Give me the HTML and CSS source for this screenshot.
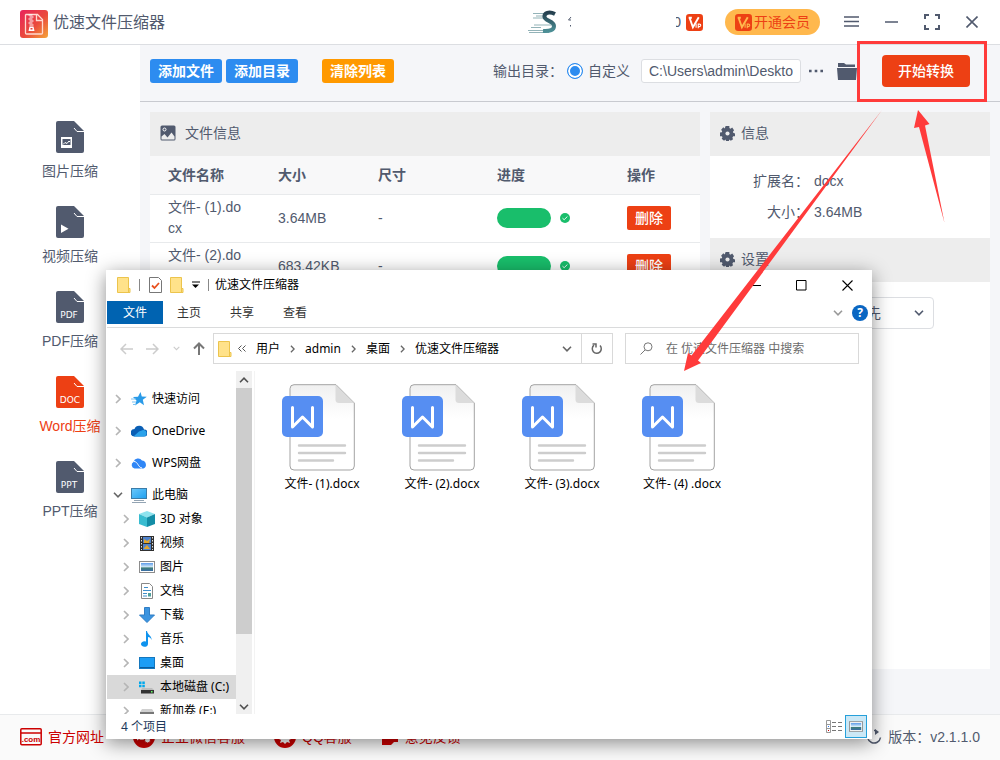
FILE: index.html
```
<!DOCTYPE html>
<html lang="zh-CN">
<head>
  <meta charset="UTF-8" />
  <meta name="viewport" content="width=device-width, initial-scale=1.0"/>
  <title>优速文件压缩器</title>
  <link rel="stylesheet" href="styles.css">
</head>
<body>

  <!-- Shared icons -->
  <svg class="sprite" aria-hidden="true">
    <defs>
      <linearGradient id="logo-bg" x1="0" y1="0" x2="1" y2="1">
        <stop offset="0" stop-color="#e8245c"/><stop offset=".55" stop-color="#ea4a3c"/><stop offset="1" stop-color="#f5a63a"/>
      </linearGradient>
      <linearGradient id="avatar-s" x1="0" y1="0" x2="0" y2="1">
        <stop offset="0" stop-color="#25404f"/><stop offset="1" stop-color="#4c8f96"/>
      </linearGradient>
      <linearGradient id="paper" x1="0" y1="0" x2="0" y2="1">
        <stop offset="0" stop-color="#f0f0f0"/><stop offset=".4" stop-color="#fff"/>
      </linearGradient>
      <linearGradient id="sky" x1="0" y1="0" x2="0" y2="1">
        <stop offset="0" stop-color="#5b9bea"/><stop offset=".5" stop-color="#d8ecf8"/><stop offset=".6" stop-color="#3f7f78"/><stop offset="1" stop-color="#3b6ea8"/>
      </linearGradient>
      <linearGradient id="screen" x1="0" y1="0" x2="1" y2="1">
        <stop offset="0" stop-color="#6cc8fa"/><stop offset="1" stop-color="#1fa0f0"/>
      </linearGradient>
    </defs>
    <symbol id="page" viewBox="0 0 28 32">
      <path d="M2 0H18L28 10V30a2 2 0 0 1-2 2H2a2 2 0 0 1-2-2V2a2 2 0 0 1 2-2z" fill="currentColor"/>
      <path d="M18 7l3 3.500h7" fill="none" stroke="#fff"/>
    </symbol>
    <symbol id="folder" viewBox="0 0 14 16">
      <path d="M.5.500h11v11h1.500v4H.5z" fill="#ffe28a" stroke="#ecc44c"/>
      <path d="M11.500 11v4" stroke="#ecc44c"/>
    </symbol>
    <symbol id="vip" viewBox="0 0 16 16">
      <rect width="16" height="16" rx="3" fill="#ed4014"/>
      <path d="M2.500 3.500h3M3.500 4l3 8.500L12 3" fill="none" stroke="var(--vip)" stroke-width="1.800"/>
      <path d="M9.500 9v4M11.500 13.500V9.500h1.200a1.200 1.200 0 0 1 0 2.400h-1" fill="none" stroke="var(--vip)"/>
    </symbol>
    <symbol id="gear" viewBox="0 0 16 16">
      <path d="M6 0h4v2.200l1.200.6L13 1.500 15 4.500 13.800 6l.3 1.300L16 8v3h-2l-.8 1.500.8 1.500-2.500 1.800-1.500-1.300L9.500 16h-3l-.7-1.600-1.500 1.300L1.800 13.500l.9-1.500L2 11H0V7l2-.3L2.300 5.500 1.200 4 3.500 1.300 5 2.700z" fill="currentColor"/>
      <circle cx="8" cy="8" r="2.200" fill="#ededed"/>
    </symbol>
    <symbol id="right" viewBox="0 0 6 10"><path d="M1 1l4 4-4 4" fill="none" stroke="currentColor" stroke-width="1.600"/></symbol>
    <symbol id="down" viewBox="0 0 10 6"><path d="M1 .8l4 4 4-4" fill="none" stroke="currentColor" stroke-width="1.600"/></symbol>
    <symbol id="ok" viewBox="0 0 10 10">
      <circle cx="5" cy="5" r="5" fill="#19be6b"/><path d="M2.500 5.200l1.700 1.500 3.200-3.200" fill="none" stroke="#fff" stroke-width=".9"/>
    </symbol>
    <symbol id="photo" viewBox="0 0 16 12">
      <rect x=".5" y=".5" width="15" height="11" fill="#fff" stroke="#8c8c8c"/><rect x="2" y="2" width="12" height="8" fill="url(#sky)"/>
    </symbol>
    <symbol id="word" viewBox="0 0 80 88">
      <path d="M12 .7H54L72.300 19V82a4 4 0 0 1-4 4H12a4 4 0 0 1-4-4V4.700a4 4 0 0 1 4-4z" fill="url(#paper)" stroke="#a3a3a3"/>
      <path d="M53.500.700L72 19H57a3.500 3.500 0 0 1-3.500-3.500z" fill="#dcdcdc"/>
      <rect y="12" width="41" height="41" rx="5" fill="#568ef2"/>
      <path d="M10.500 23.500V43l10-10 10 10V23.500" fill="none" stroke="#fff" stroke-width="3" stroke-linecap="round" stroke-linejoin="round"/>
      <path d="M17 61.500h46M17 69h46M17 76.500h34" stroke="#cdcdcd" stroke-width="2.400" stroke-linecap="round"/>
    </symbol>
  </svg>

  <div class="app">
    <header class="topbar">
      <div class="brand">
        <svg width="28" height="28" viewBox="0 0 28 28">
          <rect width="28" height="28" rx="3" fill="url(#logo-bg)"/>
          <path d="M6 4.500h11.500l5 5V23a1 1 0 0 1-1 1H6.500a1 1 0 0 1-1-1V5z" fill="none" stroke="#ffd9d0" stroke-width="1.300"/>
          <path d="M16.500 5v5.500h5.500" fill="none" stroke="#ffd9d0" stroke-width="1.300"/>
          <path d="M8.500 5h4M9.500 7h4M8.500 9h4M9.500 11h4M8.500 13h4M9.500 15h4" stroke="#fff" stroke-width="1.200"/>
          <path d="M9.500 16.500h4l1 4.500h-6z" fill="#fff"/><rect x="10.500" y="18" width="2" height="1.500" fill="#e8433f"/>
        </svg>
        <h1>优速文件压缩器</h1>
      </div>
      <div class="account">
        <svg class="avatar" width="30" height="24" viewBox="0 0 30 24">
          <path d="M5 3.500h11M8 6h7M5 8h10M6 15h18M3 17.500h10M0 20.500h18M1 22.500h20" stroke="#93b3b8" stroke-width="1.200"/>
          <path d="M27 4C21 1 16 3 16.500 7c.5 4 9.500 4 9.500 9 0 4-4 5.500-11 5" fill="none" stroke="url(#avatar-s)" stroke-width="4"/>
        </svg>
        <svg class="name-end" width="4" height="10" viewBox="0 0 4 10"><path d="M3 0L.5 3H3M2.500 8v1.500" fill="none" stroke="#515a6e"/></svg>
        <span class="count">0</span>
        <svg class="vip" width="17" height="17"><use href="#vip"/></svg>
        <button class="member"><svg width="17" height="17"><use href="#vip"/></svg>开通会员</button>
      </div>
      <div class="controls">
        <button aria-label="菜单"><svg width="15" height="12" viewBox="0 0 15 12"><path d="M0 1h15M0 5.500h15M0 10h15" stroke="currentColor" stroke-width="1.500"/></svg></button>
        <button aria-label="最小化"><svg width="13" height="12" viewBox="0 0 13 12"><path d="M0 6h13" stroke="currentColor" stroke-width="1.500"/></svg></button>
        <button aria-label="最大化"><svg width="16" height="16" viewBox="0 0 16 16"><path d="M1 5V1h4M11 1h4v4M15 11v4h-4M5 15H1v-4" fill="none" stroke="currentColor" stroke-width="2"/></svg></button>
        <button aria-label="关闭"><svg width="12" height="12" viewBox="0 0 12 12"><path d="M.5.500l11 11M11.500.500l-11 11" stroke="currentColor" stroke-width="1.600"/></svg></button>
      </div>
    </header>

    <div class="workspace">
      <nav class="sidebar">
        <a href="#image"><svg width="28" height="32"><use href="#page"/><rect x="5" y="16" width="11" height="11" fill="#fff"/><rect x="6.500" y="18" width="8" height="6" fill="#515a6e"/><path d="M7 23.500l2-2 2 1 2-2.500 1 1" fill="none" stroke="#fff"/></svg>图片压缩</a>
        <a href="#video"><svg width="28" height="32"><use href="#page"/><path d="M5 18.500v8.500l7.500-4.200z" fill="#fff"/></svg>视频压缩</a>
        <a href="#pdf"><svg width="28" height="32"><use href="#page"/><text x="13" y="27">PDF</text></svg>PDF压缩</a>
        <a href="#word-files" class="active"><svg width="28" height="32"><use href="#page"/><text x="14" y="27">DOC</text></svg>Word压缩</a>
        <a href="#ppt"><svg width="28" height="32"><use href="#page"/><text x="13" y="27">PPT</text></svg>PPT压缩</a>
      </nav>

      <main>
        <div class="toolbar">
          <button class="btn add">添加文件</button>
          <button class="btn add">添加目录</button>
          <button class="btn clear">清除列表</button>
          <div class="output">
            <span>输出目录：</span>
            <label class="choice"><input type="radio" name="output" checked>自定义</label>
            <input class="path" type="text" aria-label="输出路径" value="C:\Users\admin\Deskto">
            <button class="icon-btn" aria-label="更多"><svg width="14" height="4" viewBox="0 0 14 4"><path d="M0 .7h2.600v2.600H0zM5.700.700h2.600v2.600H5.700zM11.400.700H14v2.600h-2.600z" fill="currentColor"/></svg></button>
            <button class="icon-btn" aria-label="打开目录"><svg width="20" height="17" viewBox="0 0 20 17"><path d="M1 0h6l2 1.500h9V4H1zM0 5h20l-1 12H1z" fill="currentColor"/></svg></button>
          </div>
          <button class="start">开始转换</button>
        </div>

        <div class="content">
          <section class="card files">
            <h2><svg width="16" height="16" viewBox="0 0 16 16"><rect x=".5" y=".5" width="15" height="15" rx="1.500" fill="#515a6e"/><circle cx="4.500" cy="4.500" r="1.500" fill="none" stroke="#fff"/><path d="M1.500 14.500v-3l3-2.500 3 3.500 4-5 3 4v3z" fill="#ededed"/></svg>文件信息</h2>
            <table>
              <thead>
                <tr><th class="c-name">文件名称</th><th class="c-size">大小</th><th class="c-dim">尺寸</th><th class="c-prog">进度</th><th>操作</th></tr>
              </thead>
              <tbody>
                <tr>
                  <td class="name">文件- (1).docx</td><td>3.64MB</td><td>-</td>
                  <td><div class="state"><span class="bar"></span><svg width="10" height="10"><use href="#ok"/></svg></div></td>
                  <td><button class="remove">删除</button></td>
                </tr>
                <tr>
                  <td class="name">文件- (2).docx</td><td>683.42KB</td><td>-</td>
                  <td><div class="state"><span class="bar"></span><svg width="10" height="10"><use href="#ok"/></svg></div></td>
                  <td><button class="remove">删除</button></td>
                </tr>
              </tbody>
            </table>
          </section>

          <aside class="card detail">
            <h2><svg width="15" height="15"><use href="#gear"/></svg>信息</h2>
            <dl>
              <dt>扩展名：</dt><dd>docx</dd>
              <dt>大小：</dt><dd>3.64MB</dd>
            </dl>
            <h2><svg width="15" height="15"><use href="#gear"/></svg>设置</h2>
            <div class="setting">
              <select aria-label="压缩设置"><option>画质优先</option></select>
              <svg width="10" height="6"><use href="#down"/></svg>
            </div>
          </aside>
        </div>
      </main>
    </div>

    <footer class="bottom">
      <a href="#site"><svg width="22" height="18" viewBox="0 0 22 18"><rect x=".8" y=".8" width="20.400" height="16" rx="1" fill="none" stroke="#c00" stroke-width="1.500"/><path d="M1 5h20" stroke="#c00" stroke-width="1.500"/><text x="11" y="14" class="dotcom">.com</text></svg>官方网址</a>
      <a href="#wechat"><svg width="22" height="22" viewBox="0 0 22 22"><circle cx="11" cy="11" r="11" fill="#c00"/><path d="M4 10a5 4 0 0 1 10 0 5 4 0 0 1-8 3l-2 1.500z" fill="#fff"/><circle cx="14.500" cy="14" r="3" fill="#fff" stroke="#c00"/></svg>企业微信客服</a>
      <a href="#qq"><svg width="22" height="22" viewBox="0 0 22 22"><circle cx="11" cy="11" r="11" fill="#c00"/><path d="M11 4a4 4 0 0 1 4 4l2 5-2 1 1 3-3-1-2 2-2-2-3 1 1-3-2-1 2-5a4 4 0 0 1 4-4z" fill="#fff"/></svg>QQ客服</a>
      <a href="#feedback"><svg width="18" height="18" viewBox="0 0 18 18"><path d="M1 2h12l4 4v8h-4l-3 3H1z" fill="#c00"/><path d="M4 7h8M4 10h6" stroke="#fff"/></svg>意见反馈</a>
      <span class="version"><svg width="16" height="16" viewBox="0 0 16 16"><path d="M3 3.500a6.500 6.500 0 1 0 11.500 5M8 1.500h2" fill="none" stroke="#515a6e" stroke-width="1.500"/><path d="M9 0l4 3-4 3z" fill="#515a6e"/></svg>版本：v2.1.1.0</span>
    </footer>
  </div>

  <!-- File explorer window -->
  <section class="explorer">
    <div class="titlebar">
      <svg width="14" height="16"><use href="#folder"/></svg>
      <i class="sep"></i>
      <svg width="13" height="16" viewBox="0 0 13 16"><path d="M.5.500h9l3 3v12H.5z" fill="#fff" stroke="#777"/><path d="M3 8.500l2.500 2.500L10 6" fill="none" stroke="#e8501e" stroke-width="1.800"/></svg>
      <svg width="14" height="16"><use href="#folder"/></svg>
      <svg class="drop" width="8" height="8" viewBox="0 0 8 8"><path d="M0 1h8" stroke="#000"/><path d="M0 3.500h7L3.500 7z"/></svg>
      <i class="sep"></i>
      <span class="title">优速文件压缩器</span>
      <div class="win-controls">
        <button aria-label="最小化"><svg width="11" height="11" viewBox="0 0 11 11"><path d="M0 5.500h11" stroke="#000"/></svg></button>
        <button aria-label="最大化"><svg width="11" height="11" viewBox="0 0 11 11"><path d="M.5.500h9.500v9.500H.5z" fill="none" stroke="#000"/></svg></button>
        <button aria-label="关闭"><svg width="11" height="11" viewBox="0 0 11 11"><path d="M.5.500l10 10M10.500.500l-10 10" stroke="#000" stroke-width="1.100"/></svg></button>
      </div>
    </div>

    <div class="ribbon">
      <button class="file-tab">文件</button>
      <button>主页</button>
      <button>共享</button>
      <button>查看</button>
      <div class="help">
        <svg class="grey" width="10" height="6"><use href="#down"/></svg>
        <span>?</span>
      </div>
    </div>

    <div class="navrow">
      <div class="arrows">
        <svg class="off" width="13" height="12" viewBox="0 0 13 12"><path d="M6 1L1 6l5 5M1 6h12" fill="none" stroke="currentColor" stroke-width="1.500"/></svg>
        <svg class="off" width="13" height="12" viewBox="0 0 13 12"><path d="M7 1l5 5-5 5M12 6H0" fill="none" stroke="currentColor" stroke-width="1.500"/></svg>
        <svg class="off" width="7" height="5"><use href="#down"/></svg>
        <svg class="up" width="12" height="13" viewBox="0 0 12 13"><path d="M1 6.500L6 1.500l5 5M6 2v11" fill="none" stroke="currentColor" stroke-width="2"/></svg>
      </div>
      <div class="address">
        <svg width="14" height="16"><use href="#folder"/></svg>
        <svg class="back" width="8" height="7" viewBox="0 0 8 7"><path d="M3.500.500l-3 3 3 3M7.500.500l-3 3 3 3" fill="none" stroke="#555"/></svg>
        <a href="#users">用户</a>
        <svg width="5" height="8"><use href="#right"/></svg>
        <a href="#admin">admin</a>
        <svg width="5" height="8"><use href="#right"/></svg>
        <a href="#desktop">桌面</a>
        <svg width="5" height="8"><use href="#right"/></svg>
        <a href="#current">优速文件压缩器</a>
        <svg class="more" width="10" height="6"><use href="#down"/></svg>
        <button aria-label="刷新"><svg width="12" height="12" viewBox="0 0 12 12"><path d="M3 2.200A4.500 4.500 0 1 0 9 2.600" fill="none" stroke="#666" stroke-width="1.500"/><path d="M1.500 1h3.500v3.500" fill="none" stroke="#666" stroke-width="1.500"/></svg></button>
      </div>
      <label class="search">
        <svg width="13" height="13" viewBox="0 0 13 13"><circle cx="8" cy="4.800" r="4" fill="none" stroke="#777"/><path d="M5 8L.5 12.500" stroke="#777"/></svg>
        <input type="text" aria-label="搜索" placeholder="在 优速文件压缩器 中搜索">
      </label>
    </div>

    <div class="panes">
      <ul class="tree">
        <li class="root"><svg class="tw" width="6" height="10"><use href="#right"/></svg><svg width="16" height="16" viewBox="0 0 16 16"><path d="M9.500 1l1.300 4.500 5 .3-4 3 1.200 5.500-4.200-3L4 14.500l1.500-5L2 6l5-.3z" fill="#2a9be8"/><path d="M0 8h5M1 11h4M2 13.500h3" stroke="#7cc3f2"/></svg>快速访问</li>
        <li class="root"><svg class="tw" width="6" height="10"><use href="#right"/></svg><svg width="16" height="16" viewBox="0 0 16 16"><path d="M3.500 13.500a3.500 3.500 0 0 1 0-7.500A5 5 0 0 1 13 6.500a3.500 3.500 0 0 1 0 7z" fill="#0a5fb5"/><path d="M2.500 13.500l5.500-5 4-1.500a3.300 3.300 0 0 1 1 6.500z" fill="#2ba2ea"/></svg>OneDrive</li>
        <li class="root"><svg class="tw" width="6" height="10"><use href="#right"/></svg><svg width="16" height="16" viewBox="0 0 16 16"><path d="M3.500 13.500A3.500 3.500 0 0 1 2.500 7 4.800 4.800 0 0 1 11 5.500a4.200 4.200 0 0 1 1.500 8z" fill="#2f86f6"/><path d="M3 6.500c4 0 4 6 8 6.500" fill="none" stroke="#fff"/></svg>WPS网盘</li>
        <li class="root"><svg class="tw open" width="10" height="6"><use href="#down"/></svg><svg width="16" height="16" viewBox="0 0 16 16"><rect x=".5" y="1.500" width="15" height="10" fill="url(#screen)" stroke="#3b7ca8"/><path d="M3 13.500h10M1 15.500h14" stroke="#93a4b3"/></svg>此电脑</li>
        <li><svg class="tw" width="6" height="10"><use href="#right"/></svg><svg width="16" height="16" viewBox="0 0 16 16"><path d="M8 0l8 3-8 3.500L0 3z" fill="#8ee3ee"/><path d="M0 3l8 3.500V16l-8-3z" fill="#38bcd0"/><path d="M16 3L8 6.500V16l8-3z" fill="#138da6"/></svg>3D 对象</li>
        <li><svg class="tw" width="6" height="10"><use href="#right"/></svg><svg width="16" height="16" viewBox="0 0 16 16"><rect x="1" y="1" width="14" height="15" fill="#303030"/><path d="M2.500 2v13M13.500 2v13" stroke="#ddd" stroke-dasharray="1.500 1.500"/><path d="M4 2h8v6H4zM4 9h8v6H4z" fill="#4f83cc"/><path d="M5 4l3 2 3-2-1 4H5zM5 13l3-3 3 4H5z" fill="#e2a52b"/></svg>视频</li>
        <li><svg class="tw" width="6" height="10"><use href="#right"/></svg><svg width="16" height="12"><use href="#photo"/></svg>图片</li>
        <li><svg class="tw" width="6" height="10"><use href="#right"/></svg><svg width="16" height="16" viewBox="0 0 16 16"><path d="M2.500.500h8l3 3v12h-11z" fill="#fff" stroke="#888"/><path d="M5 4.500h4M4 7.500h8M4 10.500h4M4 13h4" stroke="#3f8fcb"/><path d="M9 10h3v3.500H9z" fill="#4f9f9b"/></svg>文档</li>
        <li><svg class="tw" width="6" height="10"><use href="#right"/></svg><svg width="16" height="16" viewBox="0 0 16 16"><path d="M5.500.500h5V8h5L8 15.500.5 8h5z" fill="#3b94e0" stroke="#2f7dc4"/></svg>下载</li>
        <li><svg class="tw" width="6" height="10"><use href="#right"/></svg><svg width="16" height="16" viewBox="0 0 16 16"><path d="M8 0c.5 4 5 4.500 4.500 9-.5-2-2-3-3.500-3v7a3.500 2.800 0 1 1-2-2.500V0z" fill="#0f93ee"/></svg>音乐</li>
        <li><svg class="tw" width="6" height="10"><use href="#right"/></svg><svg width="16" height="16" viewBox="0 0 16 16"><rect x=".5" y="2.500" width="15" height="11" fill="#1c9df5" stroke="#1577bd"/><path d="M1 12.500h14" stroke="#0a5c9e"/></svg>桌面</li>
        <li class="picked"><svg class="tw" width="6" height="10"><use href="#right"/></svg><svg width="16" height="16" viewBox="0 0 16 16"><path d="M0 2.500h2.500V5H0zM3.300 2.500h2.500V5H3.300zM0 5.800h2.500v2.500H0zM3.300 5.800h2.500v2.500H3.300z" fill="#00a8ec"/><path d="M3 9h10l2 2H2z" fill="#bdbdbd"/><rect x="2" y="11" width="13" height="3.500" fill="#333"/><rect x="12" y="12" width="1.500" height="1.500" fill="#6f6"/></svg>本地磁盘 (C:)</li>
        <li><svg class="tw" width="6" height="10"><use href="#right"/></svg><svg width="16" height="16" viewBox="0 0 16 16"><path d="M3 6h10l2 3H1z" fill="#d0d0d0"/><rect x="1" y="9" width="14" height="4" fill="#777"/></svg>新加卷 (E:)</li>
      </ul>
      <div class="scroll">
        <svg class="flip" width="10" height="6"><use href="#down"/></svg>
        <div class="thumb"></div>
        <svg width="10" height="6"><use href="#down"/></svg>
      </div>
      <div class="grid">
        <figure><svg width="80" height="88"><use href="#word"/></svg><figcaption>文件- (1).docx</figcaption></figure>
        <figure><svg width="80" height="88"><use href="#word"/></svg><figcaption>文件- (2).docx</figcaption></figure>
        <figure><svg width="80" height="88"><use href="#word"/></svg><figcaption>文件- (3).docx</figcaption></figure>
        <figure><svg width="80" height="88"><use href="#word"/></svg><figcaption>文件- (4) .docx</figcaption></figure>
      </div>
    </div>

    <div class="status">
      <span>4 个项目</span>
      <div class="views">
        <button aria-label="详细信息"><svg width="16" height="13" viewBox="0 0 16 13"><path d="M.5.500h4v12h-4zM.5 4.500h4M.5 8.500h4" fill="none" stroke="#999"/><path d="M6 2.500h4M12 2.500h4M6 6.500h4M12 6.500h4M6 10.500h4M12 10.500h4" stroke="#777"/><path d="M2 6.500h1" stroke="#27f"/><path d="M2 10.500h1" stroke="#c00"/></svg></button>
        <button class="on" aria-label="大图标"><svg width="14" height="11"><use href="#photo"/></svg></button>
      </div>
    </div>
  </section>

  <!-- Pointers to the start button and the file -->
  <svg class="marks" width="1000" height="760" aria-hidden="true">
    <rect x="858.500" y="42.500" width="127" height="58" fill="none" stroke="#ff3b3b" stroke-width="3"/>
    <path d="M684 371L688 353l3.500 2.500L882 110 698 360.500l3 2.500zM918 110l-4 18 5-1L944.500 223 925 125.500l4.500-1.500z" fill="#ff3b3b"/>
  </svg>

</body>
</html>
```
FILE: styles.css
```
:root {
  --text: #515a6e;
  --blue: #2d8cf0;
  --red: #ed4014;
  --head: #ededed;
  --line: #e8eaec;
  --vip: #fff;
}

* { box-sizing: border-box; }

body {
  margin: 0;
  font: 14px/20px "Liberation Sans", "Noto Sans CJK SC", sans-serif;
  color: var(--text);
  background: #fff;
}

button, input, select {
  font: inherit;
  color: inherit;
}

button {
  padding: 0;
  border: none;
  background: none;
  cursor: pointer;
}

a { color: inherit; text-decoration: none; }
svg { display: block; flex: none; }
.sprite { position: absolute; width: 0; height: 0; }

.app {
  display: flex;
  flex-direction: column;
  min-height: 100vh;
}

/* Top bar */
.topbar {
  display: flex;
  align-items: center;
  height: 45px;
  padding: 0 22px 0 20px;
  border-bottom: 1px solid #dcdee2;
}

.brand { display: flex; align-items: center; gap: 5px; padding-top: 3px; }
.brand h1 { margin: 0; padding-bottom: 2px; font-size: 16px; font-weight: normal; }

.account { display: flex; align-items: center; margin-left: auto; }
.name-end { margin-left: 10px; }

.count {
  display: flex;
  justify-content: flex-end;
  width: 5px;
  margin: 0 5px 0 104px;
  overflow: hidden;
}

.member {
  --vip: #ffb84d;
  display: flex;
  align-items: center;
  justify-content: center;
  gap: 2px;
  width: 95px;
  height: 26px;
  margin-left: 22px;
  border-radius: 13px;
  background: #ffb84d;
  color: var(--red);
}

.controls { display: flex; align-items: center; gap: 26px; margin-left: 24px; }

/* Sidebar */
.workspace { display: flex; flex: 1; }

.sidebar {
  display: flex;
  flex-direction: column;
  gap: 25px;
  width: 140px;
  padding-top: 76px;
}

.sidebar a {
  display: flex;
  flex-direction: column;
  align-items: center;
  gap: 8px;
}

.sidebar .active { color: var(--red); }

.sidebar text {
  fill: #fff;
  font: 9px "DejaVu Sans", sans-serif;
  text-anchor: middle;
}

main {
  display: flex;
  flex: 1;
  flex-direction: column;
  min-width: 0;
  background: #f5f6f9;
}

/* Toolbar */
.toolbar {
  display: flex;
  align-items: center;
  height: 57px;
  padding: 0 30px 4px 10px;
  border-bottom: 1px solid #c8cad0;
}

.btn {
  width: 72px;
  height: 24px;
  margin-right: 4px;
  border-radius: 3px;
  color: #fff;
  font-weight: bold;
}

.add { background: var(--blue); }
.clear { margin-left: 20px; background: #ff9900; }

.output { display: flex; align-items: center; margin-left: auto; }
.choice { display: flex; align-items: center; gap: 5px; margin: 0 11px 0 4px; }

.choice input {
  appearance: none;
  width: 16px;
  height: 16px;
  margin: 0;
  border: 1px solid var(--blue);
  border-radius: 50%;
  background: var(--blue);
  box-shadow: inset 0 0 0 2px #fff;
}

.path {
  width: 160px;
  height: 24px;
  padding: 0 7px;
  border: 1px solid #dcdee2;
  border-radius: 3px;
  background: #fff;
}

.icon-btn { margin-left: 8px; }
.icon-btn + .icon-btn { margin-left: 14px; }

.start {
  width: 88px;
  height: 32px;
  margin-left: 25px;
  border-radius: 4px;
  background: var(--red);
  color: #fff;
  font-weight: 500;
}

/* Panels */
.content {
  display: flex;
  flex: 1;
  gap: 10px;
  padding: 10px 10px 45px;
}

.card { background: #fff; }
.files { flex: 1; }
.detail { width: 280px; }

.card h2 {
  display: flex;
  align-items: center;
  gap: 9px;
  height: 44px;
  margin: 0;
  padding: 0 10px 2px;
  background: var(--head);
  font-size: 14px;
  font-weight: normal;
}

.detail h2 { gap: 6px; }

table {
  width: 100%;
  border-collapse: collapse;
  table-layout: fixed;
}

th, td {
  padding: 0 18px;
  border-bottom: 1px solid var(--line);
  text-align: left;
}

th { height: 38px; background: #f8f8f9; }
td { height: 48px; line-height: 21px; }
.c-name { width: 110px; }
.c-size { width: 100px; }
.c-dim { width: 119px; }
.c-prog { width: 130px; }
td:nth-child(2) { padding-right: 0; }
.name { word-break: break-all; }

.state { display: flex; align-items: center; gap: 9px; }
.bar { width: 54px; height: 20px; border-radius: 10px; background: #19be6b; }

.remove {
  width: 44px;
  height: 24px;
  border-radius: 2px;
  background: var(--red);
  color: #fff;
  font-weight: 500;
}

dl {
  display: grid;
  grid-template-columns: 99px 1fr;
  column-gap: 5px;
  row-gap: 11px;
  margin: 0;
  padding: 15px 0 16px;
}

dt { text-align: right; }
dd { margin: 0; }

.setting {
  display: flex;
  align-items: center;
  justify-content: flex-end;
  padding: 15px 56px;
}

.setting select {
  appearance: none;
  width: 120px;
  height: 32px;
  padding: 0 10px;
  border: 1px solid #dcdee2;
  border-radius: 4px;
  background: #fff;
}

.setting svg { margin: 0 10px 0 -20px; pointer-events: none; }

/* Footer */
.bottom {
  display: flex;
  align-items: center;
  gap: 29px;
  height: 46px;
  padding: 0 20px 2px;
  border-top: 1px solid var(--line);
  background: #fafafa;
}

.bottom a, .version { display: flex; align-items: center; gap: 6px; }
.bottom a { color: #c00; }
.version { margin-left: auto; }

.dotcom {
  fill: #c00;
  font: bold 8px "Liberation Sans", sans-serif;
  text-anchor: middle;
}

/* Explorer window */
.explorer {
  position: absolute;
  top: 270px;
  left: 106px;
  display: flex;
  flex-direction: column;
  width: 766px;
  height: 469px;
  padding: 1px 0 0 1px;
  background: #fff;
  box-shadow: 0 4px 18px rgba(0, 0, 0, 0.45);
  color: #000;
  font: 12px/16px "Noto Sans", "Noto Sans CJK SC", sans-serif;
}

.titlebar {
  display: flex;
  align-items: center;
  gap: 8px;
  height: 30px;
  padding: 0 19px 2px 10px;
}

.sep { width: 1px; height: 12px; margin-right: 1px; background: #888; }
.title { margin-left: -3px; }
.win-controls { display: flex; gap: 35px; margin-left: auto; }

.ribbon {
  display: flex;
  height: 27px;
  padding-bottom: 3px;
  border-bottom: 1px solid #dadbdc;
  color: #333;
}

.ribbon button { margin-left: 14px; margin-right: 15px; }
.ribbon .file-tab { width: 56px; margin: 0; background: #0063b1; color: #fff; }

.help {
  display: flex;
  align-items: center;
  gap: 9px;
  margin-left: auto;
  padding-right: 4px;
}

.help span {
  width: 16px;
  border-radius: 50%;
  background: #0a66c2;
  color: #fff;
  font-weight: bold;
  text-align: center;
}

.grey { color: #999; }

.navrow {
  display: flex;
  align-items: center;
  height: 43px;
  padding: 0 13px 2px 0;
}

.arrows {
  display: flex;
  align-items: center;
  justify-content: space-between;
  width: 106px;
  padding: 0 8px 0 13px;
}

.off { color: #ccc; }
.up { color: #777; }

.address {
  display: flex;
  flex: 1;
  align-items: center;
  height: 31px;
  padding-left: 4px;
  border: 1px solid #d9d9d9;
  color: #666;
}

.address a { margin: 0 10px; color: #000; }
.back { margin-left: 6px; }
.more { margin: 0 9px 0 auto; }

.address button {
  display: flex;
  align-items: center;
  justify-content: center;
  width: 31px;
  height: 100%;
  border-left: 1px solid #d9d9d9;
}

.search {
  display: flex;
  align-items: center;
  gap: 13px;
  width: 234px;
  height: 31px;
  margin-left: 12px;
  padding-left: 14px;
  border: 1px solid #d9d9d9;
}

.search input {
  flex: 1;
  min-width: 0;
  padding: 0;
  border: none;
  outline: none;
}

.search input::placeholder { color: #6d6d6d; }

.panes { display: flex; flex: 1; min-height: 0; }

.tree {
  width: 129px;
  margin: 0;
  padding: 16px 0 0;
  overflow: hidden;
  list-style: none;
}

.tree li {
  display: flex;
  align-items: center;
  gap: 5px;
  height: 24px;
  padding-left: 16px;
  white-space: nowrap;
}

.tree .root { margin-bottom: 8px; padding-left: 8px; }
.tree .root:nth-child(4) { margin-bottom: 0; padding-left: 6px; }
.tree .tw { margin-right: 5px; color: #b5b5b5; }
.tree .open { margin-right: 3px; color: #666; }
.tree .picked { background: #d9d9d9; }

.scroll {
  display: flex;
  flex-direction: column;
  align-items: center;
  gap: 5px;
  width: 16px;
  padding: 6px 0 4px;
  background: #f0f0f0;
  color: #505050;
}

.flip { transform: rotate(180deg); }
.thumb { width: 100%; height: 246px; margin-bottom: auto; background: #cdcdcd; }

.grid {
  display: flex;
  flex: 1;
  flex-wrap: wrap;
  align-content: flex-start;
  margin-left: 2px;
  padding: 13px 0 0 7px;
  border-left: 1px solid #f3f3f3;
}

figure {
  display: flex;
  flex-direction: column;
  align-items: center;
  gap: 4px;
  width: 120px;
  margin: 0;
}

figcaption { white-space: nowrap; }

.status {
  display: flex;
  align-items: center;
  height: 25px;
  padding: 0 5px 0 14px;
  color: #1e395b;
}

.views { display: flex; align-items: center; margin-left: auto; }

.views button {
  display: flex;
  align-items: center;
  justify-content: center;
  width: 22px;
  height: 23px;
}

.views .on { border: 1px solid #26a0da; background: #cbe8f6; }

/* Pointer overlay */
.marks {
  position: absolute;
  top: 0;
  left: 0;
  pointer-events: none;
}
```
